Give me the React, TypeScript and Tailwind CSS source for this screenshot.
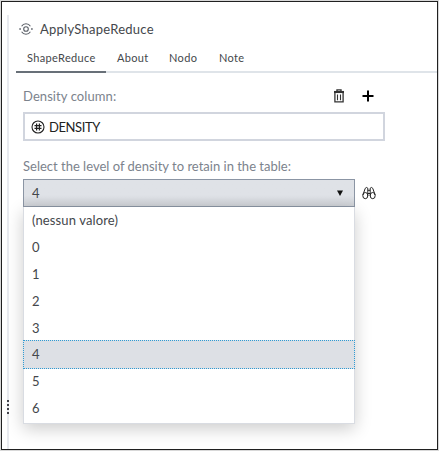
const options = ['(nessun valore)', '0', '1', '2', '3', '4', '5', '6'];

function NodeIcon() {
  return (
    <svg width="14" height="14" viewBox="0 0 14 14" fill="none" stroke="#5b6068" strokeWidth="1.1">
      <circle cx="7" cy="7" r="2.3" />
      <path d="M2.6 4.2A5.2 5.2 0 0 1 11.4 4.2M2.6 9.8A5.2 5.2 0 0 0 11.4 9.8" />
      <path d="M.3 7h1.6M12.1 7h1.6" strokeWidth="1.6" />
    </svg>
  );
}

function TrashIcon() {
  return (
    <svg width="12" height="14" viewBox="0 0 12 14" fill="none" stroke="#333">
      <path d="M4 2V.9h4V2" strokeWidth="1.4" />
      <path d="M1 3h10" strokeWidth="2.1" />
      <path d="M1.9 4v8.9h8.2V4" strokeWidth="1.3" />
      <path d="M4.5 5.5v5.7M7.5 5.5v5.7" strokeWidth="1.1" />
    </svg>
  );
}

function NumberIcon() {
  return (
    <svg width="14" height="14" viewBox="0 0 14 14" fill="none" stroke="#222">
      <circle cx="7" cy="7" r="6" strokeWidth="1.1" />
      <path d="M5.6 3.5v7M8.4 3.5v7M3.5 5.6h7M3.5 8.4h7" strokeWidth="1.2" />
    </svg>
  );
}

function BinocularsIcon() {
  return (
    <svg width="14" height="14" viewBox="0 0 14 14" fill="none" stroke="#222" strokeWidth="1">
      <path d="M.9 9 3.2 2.4Q4.300.6 5.800 2.200V10M13.100 9 10.800 2.400Q9.700.6 8.200 2.200V10M5.800 4.300h2.400M5.800 7.500h2.400" />
      <ellipse cx="3.300" cy="9.600" rx="2.500" ry="3.100" />
      <ellipse cx="10.700" cy="9.600" rx="2.500" ry="3.100" />
    </svg>
  );
}

export default function App() {
  return (
    <div className="h-[451px] w-[439px] bg-[#d8d8d8] p-px font-['Lato','Liberation_Sans',sans-serif] text-[13px] text-[#44474b]">
      <div className="flex h-[449px] w-[437px] overflow-hidden border border-[#202020] bg-white">
        <aside className="ml-[5px] mt-[13px] flex w-[2px] shrink-0 flex-col items-center bg-[#e8eaef]">
          <div className="mt-[385px] flex flex-col gap-[2px]">
            <i className="size-[2px] bg-[#42434b]" />
            <i className="size-[2px] bg-[#42434b]" />
            <i className="size-[2px] bg-[#42434b]" />
            <i className="size-[2px] bg-[#42434b]" />
          </div>
        </aside>
        <main className="min-w-0 flex-1 pl-[7px]">
          <header className="flex h-[42px] items-end gap-[7px] pl-[3px]">
            <div className="mb-[8px] h-[14px]"><NodeIcon /></div>
            <h1 className="mb-[5px] text-[13px] leading-[20px] tracking-[0.25px] whitespace-nowrap">ApplyShapeReduce</h1>
          </header>
          <nav className="flex h-[29px] border-b-2 border-[#dfe4e9] text-[11px] leading-[28px] tracking-[0.35px]">
            <span className="h-[29px] w-[90px] border-b-2 border-[#687078] pl-[11px]">ShapeReduce</span>
            <span className="w-[52px] pl-[11px]">About</span>
            <span className="w-[50px] pl-[11px]">Nodo</span>
            <span className="pl-[11px]">Note</span>
          </nav>
          <section className="pl-[7px] pt-[13px]">
            <div className="flex h-[20px] w-[361px] items-center text-[#7c838d]">
              <span className="w-[310px] pt-[2px] tracking-[0.08px]">Density column:</span>
              <TrashIcon />
              <svg className="ml-[17px]" width="12" height="12" viewBox="0 0 12 12" stroke="#000" strokeWidth="2"><path d="M.5 6h11M6 .5v11" /></svg>
            </div>
            <div className="mt-[6px] flex h-[29px] w-[362px] items-center gap-[4px] border-2 border-[#d1d5de] pl-[6px] text-[#222]">
              <NumberIcon />
              <span className="pt-[2px] tracking-[-0.4px]">DENSITY</span>
            </div>
            <p className="mt-[15px] h-[20px] leading-[20px] whitespace-nowrap text-[#7c838d]">Select the level of density to retain in the table:</p>
            <div className="mt-[3px] flex items-center">
              <div className="flex h-[28px] w-[332px] items-center justify-between border border-[#8b95a4] bg-linear-to-b from-[#dfe2e7] from-60% to-[#cdd0d5] pl-[8px] pr-[11px]">
                <span className="pt-px">4</span>
                <svg className="-mt-px" width="6" height="6" viewBox="0 0 6 6"><path d="M0 .5h6L3 6Z" fill="#111" /></svg>
              </div>
              <div className="ml-[7px] -mt-px"><BinocularsIcon /></div>
            </div>
            <ul className="relative h-[217px] w-[332px] border border-t-0 border-[#d9dce2] bg-white shadow-[0_5px_16px_rgba(0,0,0,0.2)]">
              {options.map((option) => (
                <li key={option} className={option === '4' ? '-mx-px -my-px flex h-[28.8px] items-center border border-dotted border-[#2f9bd3] bg-[#dde0e5] pt-px pl-[8px]' : option === '(nessun valore)' ? 'flex h-[27px] items-center pt-px pl-[8px] tracking-[0.12px]' : 'flex h-[26.8px] items-center pt-px pl-[8px]'}>
                  {option}
                </li>
              ))}
            </ul>
          </section>
        </main>
      </div>
    </div>
  );
}
